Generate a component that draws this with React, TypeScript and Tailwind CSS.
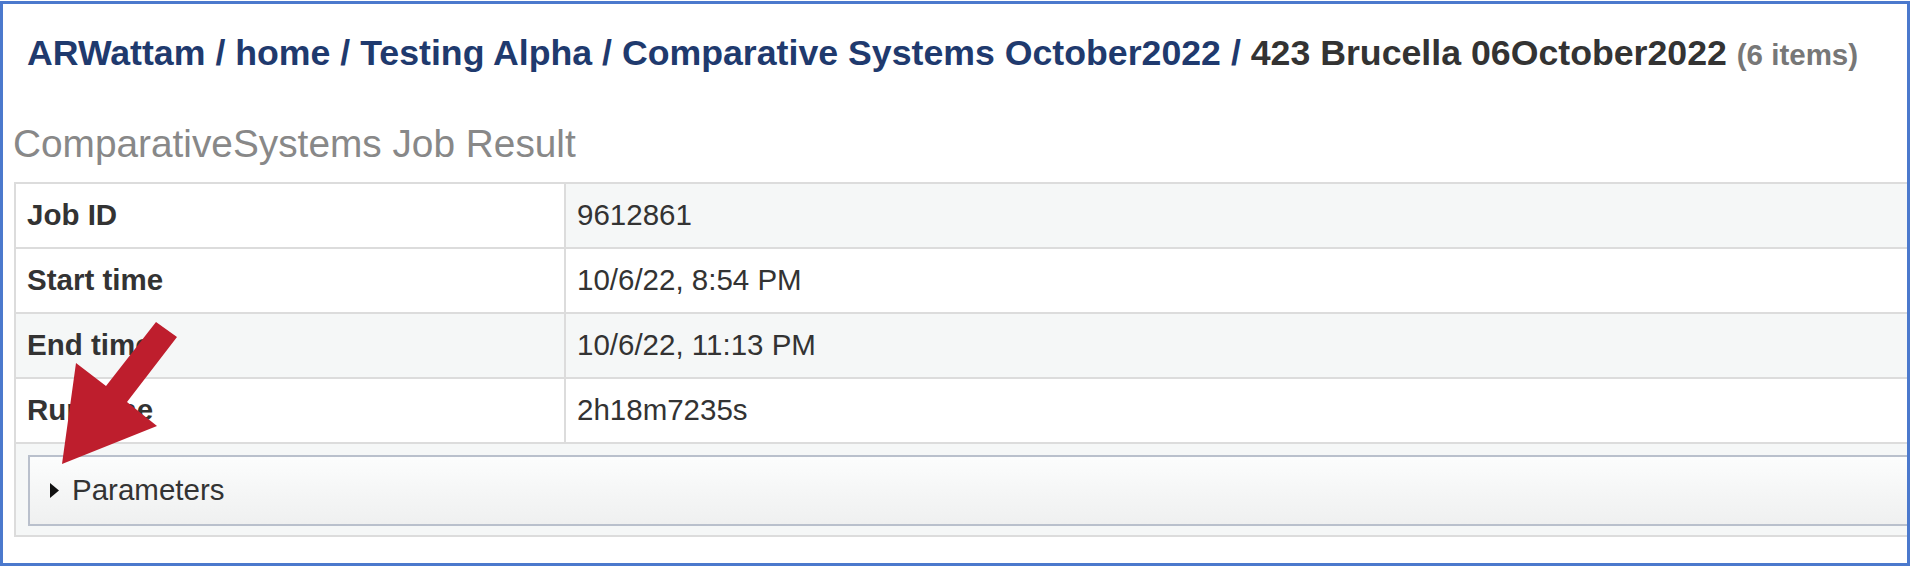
const rows = [
  { label: "Job ID", value: "9612861", thBg: "bg-white", tdBg: "bg-[#f5f7f7]" },
  { label: "Start time", value: "10/6/22, 8:54 PM", thBg: "bg-white", tdBg: "bg-white" },
  { label: "End time", value: "10/6/22, 11:13 PM", thBg: "bg-[#f5f7f7]", tdBg: "bg-[#f5f7f7]" },
  { label: "Run time", value: "2h18m7235s", thBg: "bg-white", tdBg: "bg-white" },
]

const crumbs = ["ARWattam", "home", "Testing Alpha", "Comparative Systems October2022"]

export default function App() {
  return (
    <div className="relative w-[1912px] h-[570px] overflow-hidden bg-white font-['Liberation_Sans',Arial,sans-serif] text-[#333]">
      <div className="mt-[1px] w-[1910px] h-[565px] overflow-hidden border-[3px] border-[#4b79cd]">
        <h1 className="mt-[32px] ml-[24px] whitespace-nowrap text-[35.7px] font-bold leading-none">
          {crumbs.map((c) => (
            <span key={c} className="text-[#1f3a6e]">
              {c} /{" "}
            </span>
          ))}
          <span className="text-[#333]">423 Brucella 06October2022 </span>
          <span className="text-[29.5px] text-[#777]">(6 items)</span>
        </h1>

        <h2 className="mt-[53px] ml-[10px] whitespace-nowrap text-[38.8px] leading-none text-[#888]">
          ComparativeSystems Job Result
        </h2>

        <table className="mt-[18px] ml-[11px] w-[1920px] border-collapse text-[29.5px] leading-none">
          <tbody>
            {rows.map((r) => (
              <tr key={r.label}>
                <th className={`h-[65px] w-[550px] border-2 border-[#dcdcdc] px-[11px] text-left font-bold ${r.thBg}`}>
                  {r.label}
                </th>
                <td className={`h-[65px] border-2 border-[#dcdcdc] px-[11px] ${r.tdBg}`}>{r.value}</td>
              </tr>
            ))}
            <tr>
              <td colSpan={2} className="border-2 border-[#dcdcdc] bg-[#f5f7f7] pt-[11px] pb-[9px] pl-[12px]">
                <div className="flex h-[71px] w-[1900px] items-center border-2 border-[#b9c0cc] bg-gradient-to-b from-[#fcfdfd] to-[#eff0f0] pl-[20px]">
                  <svg width="9" height="15" viewBox="0 0 9 15" className="mr-[13px]">
                    <polygon points="0,0 9,7.5 0,15" fill="#111" />
                  </svg>
                  <span className="text-[#333]">Parameters</span>
                </div>
              </td>
            </tr>
          </tbody>
        </table>
      </div>

      {/* red callout arrow pointing at the Parameters toggle */}
      <svg className="pointer-events-none absolute inset-0" width="1912" height="570" viewBox="0 0 1912 570">
        <polygon
          points="62,464 76,363 106,386 156,322 177,337 127,402 157,426"
          fill="#be1e2d"
        />
      </svg>
    </div>
  )
}
